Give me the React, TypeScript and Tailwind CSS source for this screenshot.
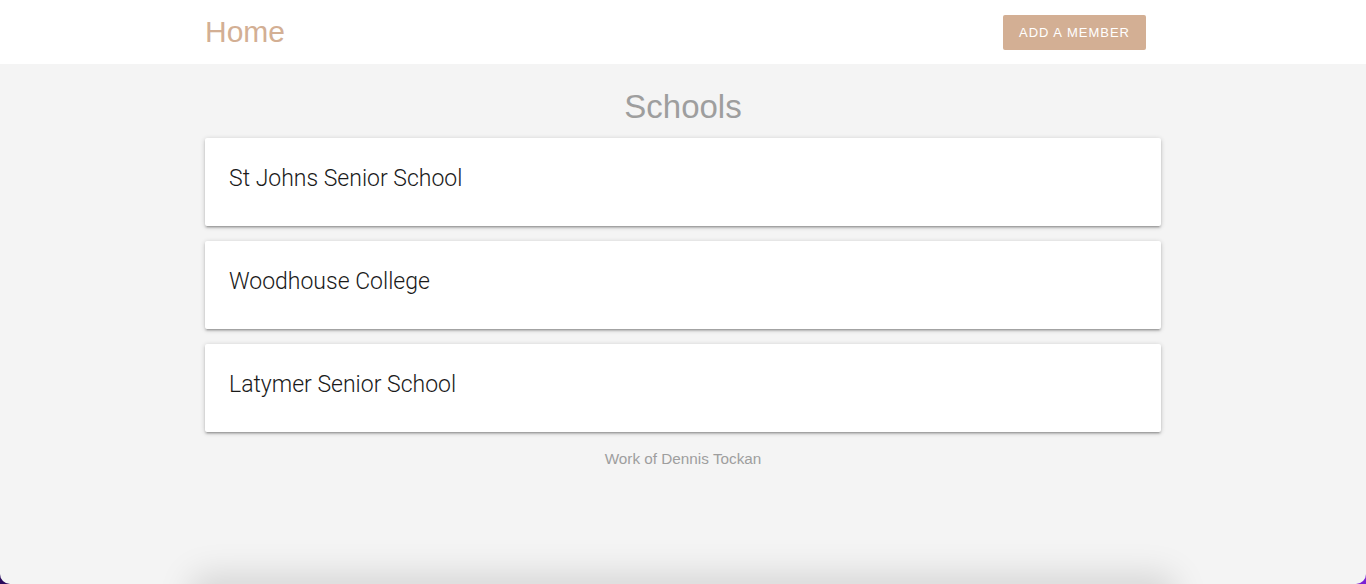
const schools = ['St Johns Senior School', 'Woodhouse College', 'Latymer Senior School']

const App = () => {
  return (
    <div className="h-[584px] overflow-hidden bg-gradient-to-r from-[#2a0b5c] to-[#7b22d4] font-['Liberation_Sans','Arial',sans-serif]">
      <div className="flex h-full flex-col overflow-hidden rounded-b-[10px] bg-[#f4f4f4]">
        <header className="h-16 shrink-0 bg-white">
          <div className="mx-auto flex h-full w-[956px] items-center justify-between pr-[15px]">
            <a className="pb-[1px] text-[30px] leading-none text-[#d3af94]">Home</a>
            <button
              type="button"
              className="mt-[1px] h-[35px] rounded-[2px] bg-[#d3af94] px-[16px] text-[13px] uppercase tracking-[1px] text-white"
            >
              Add a member
            </button>
          </div>
        </header>

        <main className="mx-auto w-[956px]">
          <h1 className="pt-[25px] pb-[14px] text-center text-[33px] leading-[35px] text-[#9e9e9e]">
            Schools
          </h1>
          <div className="flex flex-col gap-[15px]">
            {schools.map((s) => (
              <div
                key={s}
                className="flex h-[88px] items-center rounded-[2px] bg-white px-6 pb-[6px] shadow-[0_2px_2px_0_rgba(0,0,0,0.14),0_3px_1px_-2px_rgba(0,0,0,0.12),0_1px_5px_0_rgba(0,0,0,0.2)]"
              >
                <span className="font-['Roboto',sans-serif] text-[23px] font-light text-[#1a1a1a]">{s}</span>
              </div>
            ))}
          </div>
          <p className="pt-[16px] text-center text-[15.3px] text-[#9e9e9e]">Work of Dennis Tockan</p>
          <div className="mt-[124px] h-10 w-full rounded bg-[#f4f4f4] shadow-[0_-6px_34px_14px_rgba(0,0,0,0.13)]" />
        </main>
      </div>
    </div>
  )
}

export default App
